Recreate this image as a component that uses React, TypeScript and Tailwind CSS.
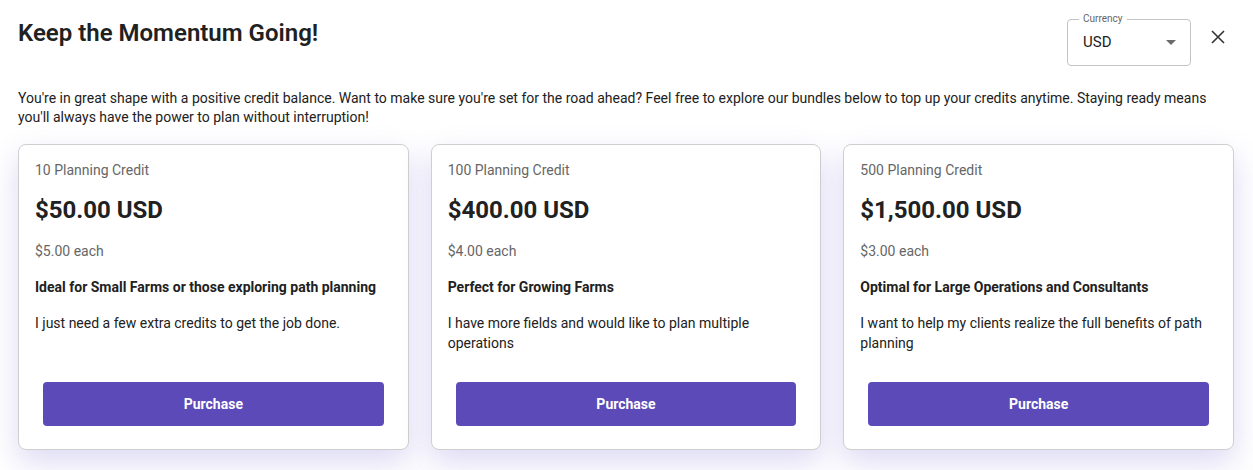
// React
import { useState } from "react";

// Bundle data
const bundles = [
  {
    credits: "10 Planning Credit",
    price: "$50.00 USD",
    each: "$5.00 each",
    headline: "Ideal for Small Farms or those exploring path planning",
    description: "I just need a few extra credits to get the job done.",
  },
  {
    credits: "100 Planning Credit",
    price: "$400.00 USD",
    each: "$4.00 each",
    headline: "Perfect for Growing Farms",
    description: "I have more fields and would like to plan multiple operations",
  },
  {
    credits: "500 Planning Credit",
    price: "$1,500.00 USD",
    each: "$3.00 each",
    headline: "Optimal for Large Operations and Consultants",
    description:
      "I want to help my clients realize the full benefits of path planning",
  },
];

export default function App() {
  // State
  const [currency] = useState("USD");

  return (
    <div className="min-h-[470px] bg-white font-['Roboto','Liberation_Sans',sans-serif] text-[#212121]">
      {/* Header */}
      <div className="flex items-start justify-between pl-[18px] pr-[21px] pt-[19px]">
        <h1 className="mt-0 text-[24px] font-semibold leading-[28px]">
          Keep the Momentum Going!
        </h1>

        <div className="flex items-start">
          {/* Currency select */}
          <div className="relative h-[47px] w-[124px] rounded border border-[#c4c4c4]">
            <span className="absolute -top-[8px] left-[11px] bg-white px-[4px] text-[10px] leading-[14px] text-[#666]">
              Currency
            </span>
            <div className="flex h-full items-center justify-between pl-[15px] pr-[14px]">
              <span className="text-[15px]">{currency}</span>
              <svg width="10" height="5" viewBox="0 0 10 5">
                <path d="M0 0 L10 0 L5 5 Z" fill="#6b6b6b" />
              </svg>
            </div>
          </div>

          {/* Close */}
          <button className="ml-[13px] mt-[8px] flex h-[20px] w-[28px] items-center justify-center">
            <svg width="14" height="14" viewBox="0 0 14 14">
              <path
                d="M1 1 L13 13 M13 1 L1 13"
                stroke="#333"
                strokeWidth="1.6"
              />
            </svg>
          </button>
        </div>
      </div>

      {/* Intro */}
      <p className="mt-[23px] px-[18px] text-[14px] leading-[19px]">
        You're in great shape with a positive credit balance. Want to make sure
        you're set for the road ahead? Feel free to explore our bundles below to
        top up your credits anytime. Staying ready means you'll always have the
        power to plan without interruption!
      </p>

      {/* Bundles */}
      <div className="mt-[17px] grid grid-cols-3 gap-[22px] pl-[18px] pr-[19px]">
        {bundles.map((bundle, index) => (
          <div
            key={index}
            className="flex flex-col rounded-lg border border-[#cfcfcf] bg-white px-4 pb-[23px] pt-[15px] shadow-[0_12px_30px_rgba(96,84,200,0.22)]"
          >
            <span className="text-[14px] leading-[20px] text-[#666]">
              {bundle.credits}
            </span>
            <span className="mt-[14px] text-[24px] font-bold leading-[32px]">
              {bundle.price}
            </span>
            <span className="mt-[15px] text-[14px] leading-[20px] text-[#666]">
              {bundle.each}
            </span>
            <span className="mt-4 text-[14px] font-bold leading-[20px]">
              {bundle.headline}
            </span>
            <p className="mt-4 min-h-[40px] text-[14px] leading-[20px]">
              {bundle.description}
            </p>
            <button className="mx-2 mt-[29px] h-11 rounded bg-[#5b4ab8] text-[14px] font-bold text-white">
              Purchase
            </button>
          </div>
        ))}
      </div>
    </div>
  );
}
